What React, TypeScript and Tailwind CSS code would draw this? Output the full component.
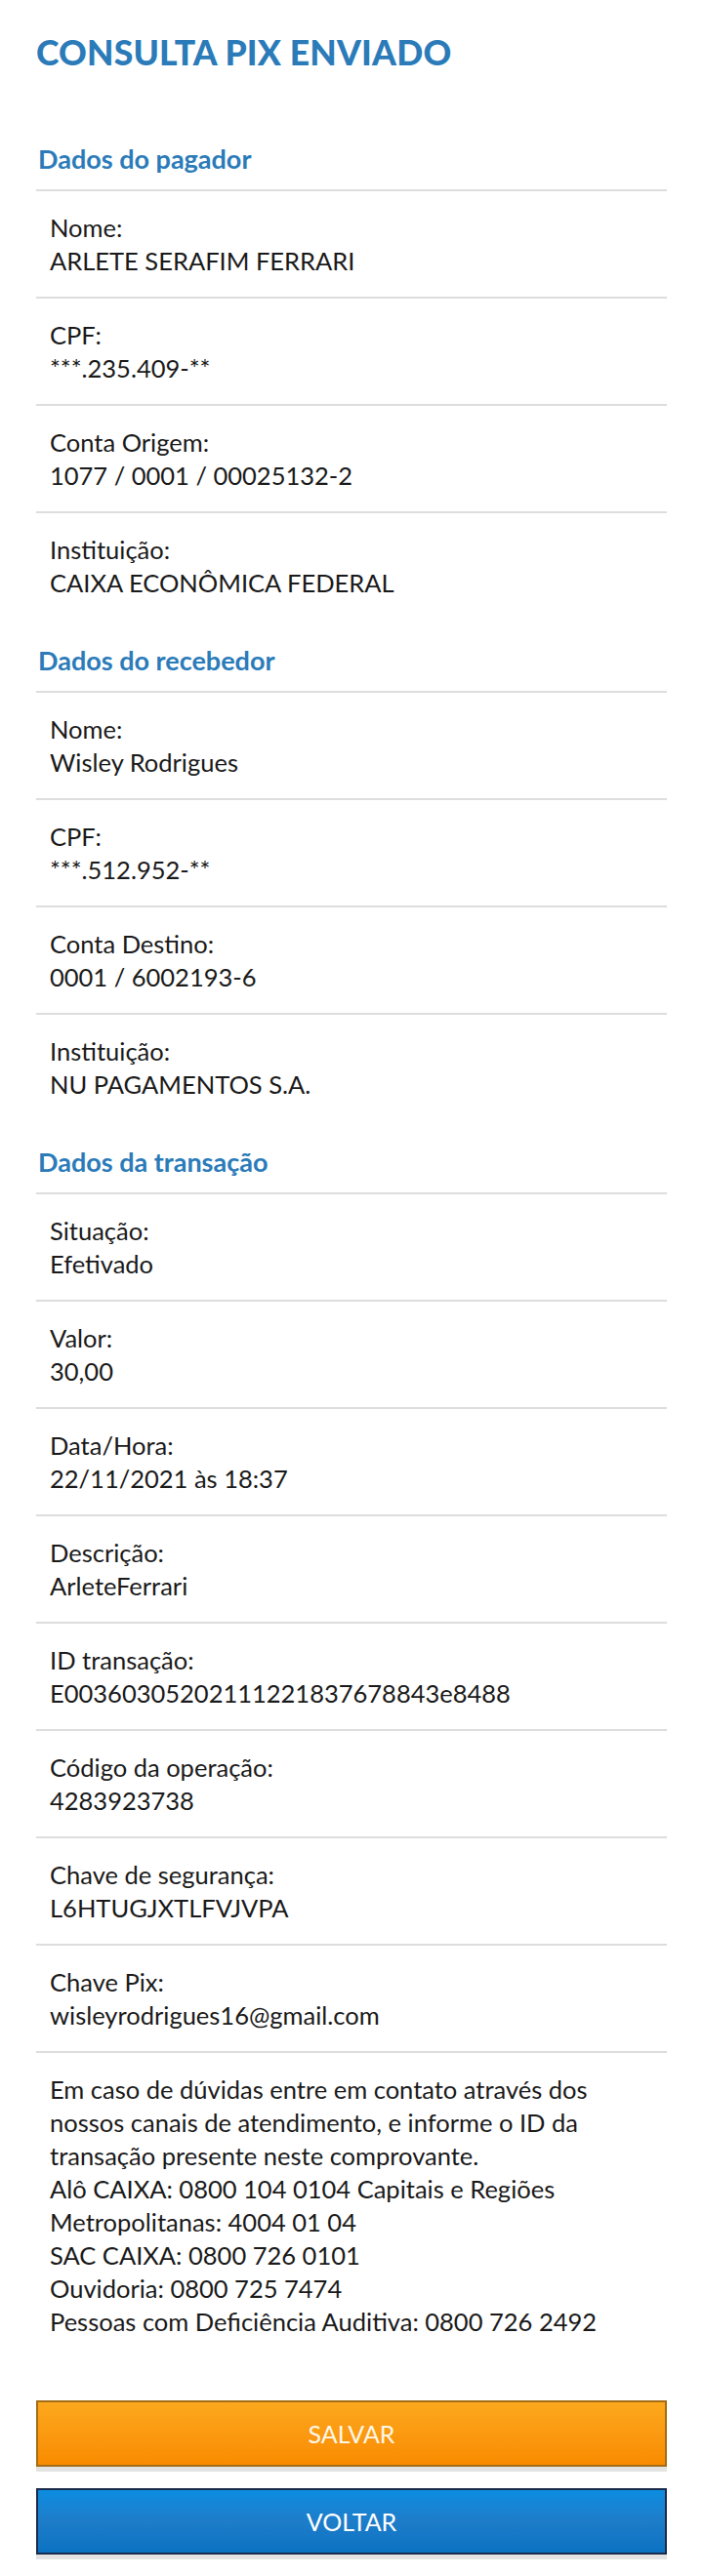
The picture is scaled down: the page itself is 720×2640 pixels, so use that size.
import React from "react";

type Field = { label: string; value: string };

const pagador: Field[] = [
  { label: "Nome:", value: "ARLETE SERAFIM FERRARI" },
  { label: "CPF:", value: "***.235.409-**" },
  { label: "Conta Origem:", value: "1077 / 0001 / 00025132-2" },
  { label: "Instituição:", value: "CAIXA ECONÔMICA FEDERAL" },
];

const recebedor: Field[] = [
  { label: "Nome:", value: "Wisley Rodrigues" },
  { label: "CPF:", value: "***.512.952-**" },
  { label: "Conta Destino:", value: "0001 / 6002193-6" },
  { label: "Instituição:", value: "NU PAGAMENTOS S.A." },
];

const transacao: Field[] = [
  { label: "Situação:", value: "Efetivado" },
  { label: "Valor:", value: "30,00" },
  { label: "Data/Hora:", value: "22/11/2021 às 18:37" },
  { label: "Descrição:", value: "ArleteFerrari" },
  { label: "ID transação:", value: "E00360305202111221837678843e8488" },
  { label: "Código da operação:", value: "4283923738" },
  { label: "Chave de segurança:", value: "L6HTUGJXTLFVJVPA" },
  { label: "Chave Pix:", value: "wisleyrodrigues16@gmail.com" },
];

const infoLines = [
  "Em caso de dúvidas entre em contato através dos",
  "nossos canais de atendimento, e informe o ID da",
  "transação presente neste comprovante.",
  "Alô CAIXA: 0800 104 0104 Capitais e Regiões",
  "Metropolitanas: 4004 01 04",
  "SAC CAIXA: 0800 726 0101",
  "Ouvidoria: 0800 725 7474",
  "Pessoas com Deficiência Auditiva: 0800 726 2492",
];

function Section({ title, fields, first }: { title: string; fields: Field[]; first?: boolean }) {
  return (
    <section className={first ? "mt-[73px]" : "mt-[27px]"}>
      <h2 className="mb-[15px] pl-[2px] text-[27px] font-bold leading-[32px] text-[#2b7bb9]">{title}</h2>
      {fields.map((f, i) => (
        <div key={f.label + i} className="border-t-2 border-[#dddddd] py-5 pl-[14px]">
          <p>{f.label}</p>
          <p className="whitespace-nowrap">{f.value}</p>
        </div>
      ))}
    </section>
  );
}

export default function App() {
  return (
    <div
      className="w-[720px] min-h-[2640px] bg-white px-[37px] pt-[34px] text-[25.5px] leading-[34px] text-[#1a1a1a]"
      style={{ fontFamily: "Lato, 'Noto Sans', sans-serif" }}
    >
      <h1 className="text-[35.5px] font-black leading-[40px] tracking-[0.2px] text-[#2b7bb9]">CONSULTA PIX ENVIADO</h1>

      <Section title="Dados do pagador" fields={pagador} first />
      <Section title="Dados do recebedor" fields={recebedor} />
      <Section title="Dados da transação" fields={transacao} />

      <div className="border-t-2 border-[#dddddd] pt-5 pl-[14px]">
        {infoLines.map((line) => (
          <p key={line} className="whitespace-nowrap">{line}</p>
        ))}
      </div>

      <div className="mt-[64px] flex flex-col gap-[22px]">
        <button className="h-[68px] w-full border-2 border-[#a46c14] bg-linear-to-b from-[#fca81c] to-[#f98b00] text-[25px] text-[#fff7e8] shadow-[0_5px_0_#e3e3e3]">
          SALVAR
        </button>
        <button className="h-[68px] w-full border-2 border-[#1b2b4b] bg-linear-to-b from-[#0b8de1] via-[#1d7dc9] to-[#0a72c2] text-[25px] text-white shadow-[0_5px_0_#e3e3e3]">
          VOLTAR
        </button>
      </div>
    </div>
  );
}
